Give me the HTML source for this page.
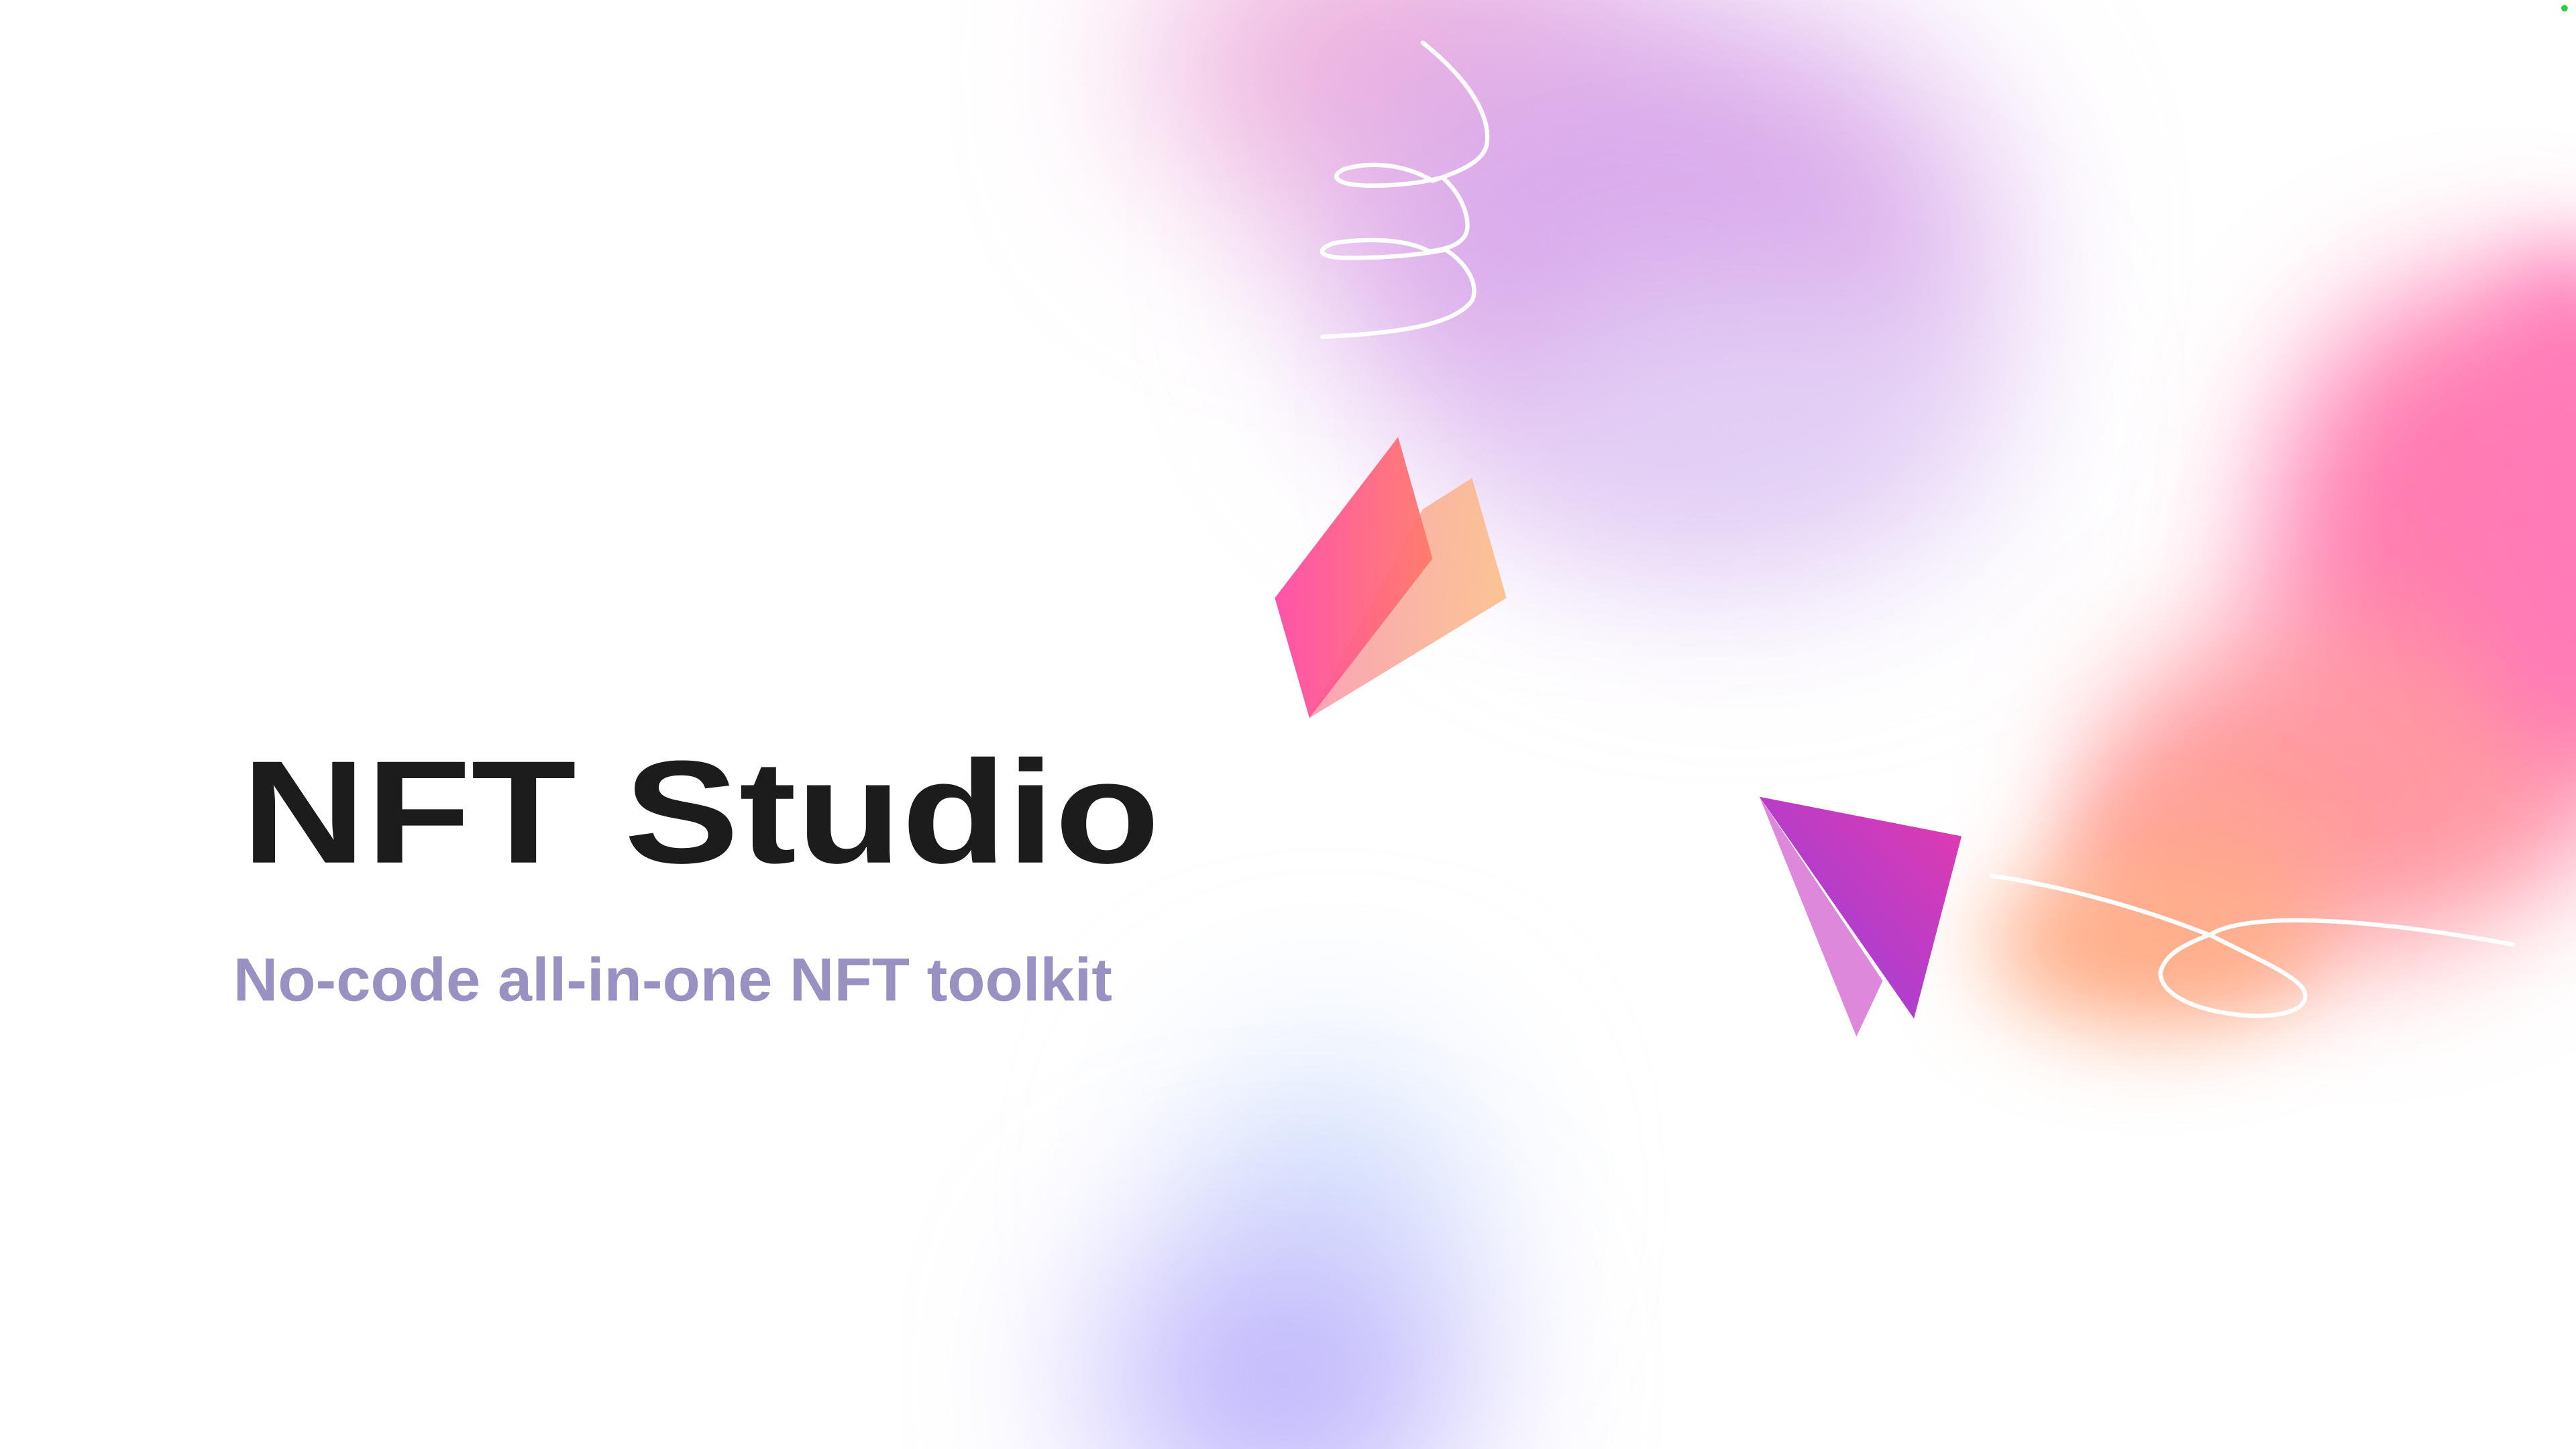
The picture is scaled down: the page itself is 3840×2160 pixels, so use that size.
<!DOCTYPE html>
<html><head><meta charset="utf-8"><style>
html,body{margin:0;padding:0;width:3840px;height:2160px;overflow:hidden;background:#fff}
svg{display:block;overflow:hidden}
</style></head><body>
<svg width="3840" height="2160" viewBox="0 0 1568 882" preserveAspectRatio="none" xmlns="http://www.w3.org/2000/svg">
<defs>
<filter id="b1" x="-100%" y="-100%" width="300%" height="300%"><feGaussianBlur stdDeviation="55"/></filter>
<filter id="b2" x="-100%" y="-100%" width="300%" height="300%"><feGaussianBlur stdDeviation="40"/></filter>
<filter id="b3" x="-100%" y="-100%" width="300%" height="300%"><feGaussianBlur stdDeviation="28"/></filter>
<linearGradient id="gp" x1="0" y1="0" x2="1" y2="0"><stop offset="0" stop-color="#ff4aa6"/><stop offset="1" stop-color="#ff7a6a"/></linearGradient>
<linearGradient id="go" x1="0" y1="0" x2="1" y2="0"><stop offset="0" stop-color="#f99aae"/><stop offset="1" stop-color="#fbbf88"/></linearGradient>
<linearGradient id="gt" x1="0" y1="1" x2="1" y2="0"><stop offset="0" stop-color="#8e40e0"/><stop offset="1" stop-color="#e43aae"/></linearGradient>
</defs>
<rect width="1568" height="882" fill="#fff"/>
<ellipse cx="850" cy="40" rx="150" ry="100" fill="#eeb2de" filter="url(#b1)"/>
<ellipse cx="1010" cy="150" rx="200" ry="150" fill="#d9a8ea" filter="url(#b1)"/>
<ellipse cx="1060" cy="260" rx="150" ry="90" fill="#e2d0f6" filter="url(#b1)"/>
<ellipse cx="1520" cy="340" rx="140" ry="170" fill="#ff7bb0" filter="url(#b2)"/>
<ellipse cx="1420" cy="480" rx="140" ry="100" fill="#ff98a0" filter="url(#b2)"/>
<ellipse cx="1340" cy="520" rx="80" ry="60" fill="#ffa294" filter="url(#b3)"/>
<ellipse cx="1310" cy="575" rx="100" ry="50" fill="#ffae88" filter="url(#b3)"/>
<ellipse cx="1565" cy="300" rx="50" ry="150" fill="#ff7ab8" filter="url(#b3)"/>
<ellipse cx="810" cy="730" rx="80" ry="90" fill="#d4e2fc" filter="url(#b1)"/>
<ellipse cx="780" cy="840" rx="110" ry="90" fill="#bdb4fc" filter="url(#b1)"/>
<polygon points="896,291 917,364 797,437 866,310" fill="url(#go)" opacity="0.9"/>
<polygon points="851,266 872,340 797,437 776,364" fill="url(#gp)" opacity="0.95"/>
<polygon points="1071,485 1146,597 1130,631" fill="#dd88da"/>
<polygon points="1071,485 1194,509 1165,620" fill="url(#gt)"/>
<path d="M866,26 C890,45 908,68 905,88 C903,98 890,104 872,110 C855,100 835,98 818,103 C808,108 815,113 835,113 C860,113 873,109 878,108 C890,118 896,135 892,143 C888,150 878,152 870,153 C855,145 830,145 812,148 C800,152 803,157 820,157 C850,157 870,154 880,152 C895,162 900,175 896,183 C885,198 850,203 805,205" fill="none" stroke="#fff" stroke-width="2.6" stroke-linecap="round"/>
<path d="M1212,533 C1260,540 1310,555 1347,570 C1370,582 1395,592 1402,602 C1408,614 1390,620 1365,618 C1335,615 1315,605 1315,592 C1318,580 1330,575 1347,568 C1365,558 1420,555 1530,575" fill="none" stroke="#fff" stroke-width="2.6" stroke-linecap="round"/>
<circle cx="1561" cy="5" r="2" fill="#2ecc40"/>
<text x="147" y="525" font-family="Liberation Sans, Arial, sans-serif" font-weight="700" font-size="89" fill="#1c1c1c" textLength="559" lengthAdjust="spacingAndGlyphs">NFT Studio</text>
<text x="142" y="609" font-family="Liberation Sans, Arial, sans-serif" font-weight="700" font-size="37" fill="#9a91c3" textLength="535" lengthAdjust="spacingAndGlyphs">No-code all-in-one NFT toolkit</text>
</svg>
</body></html>
